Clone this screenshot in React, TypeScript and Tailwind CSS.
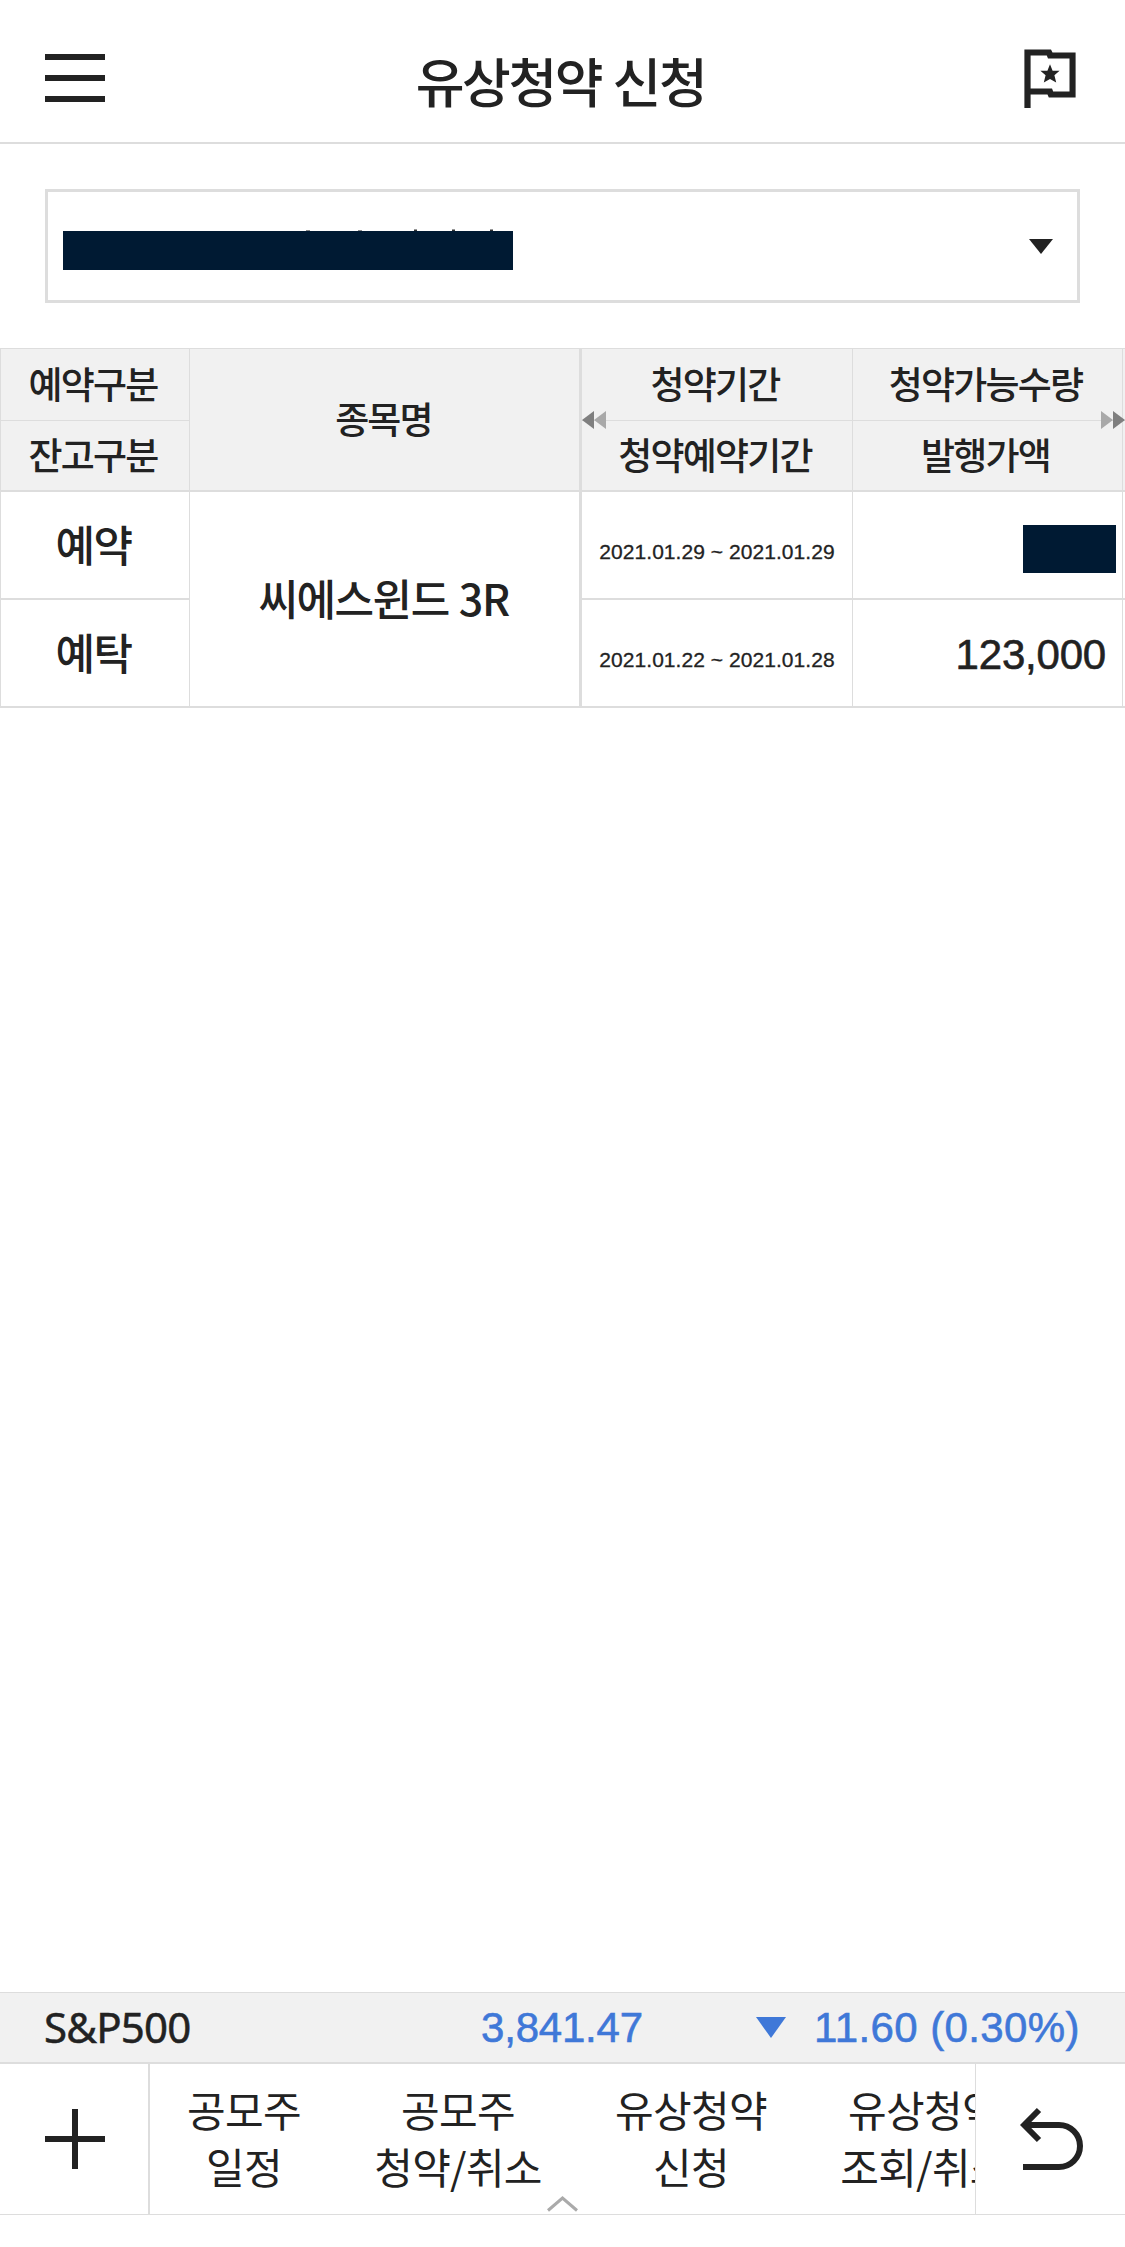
import type { ReactNode } from "react";
import clsx from "clsx";

const TABS = [
  { lines: ["공모주", "일정"], width: "w-[188px]" },
  { lines: ["공모주", "청약/취소"], width: "w-[240px]" },
  { lines: ["유상청약", "신청"], width: "w-[226px]" },
  { lines: ["유상청약", "조회/취소"], width: "w-[240px]" },
];

function HeadCell({ children, className }: { children?: ReactNode; className?: string }) {
  return (
    <div
      className={clsx(
        "flex items-center justify-center whitespace-nowrap bg-[#f1f1f1] pb-[3px] text-[37px] font-medium leading-none tracking-[-1.8px]",
        className,
      )}
    >
      {children}
    </div>
  );
}

function Cell({ children, className }: { children?: ReactNode; className?: string }) {
  return (
    <div className={clsx("flex items-center whitespace-nowrap border-b-2 border-[#ddd] leading-none", className)}>
      {children}
    </div>
  );
}

// Two stacked headings over two stacked values
function SplitColumn({ head, className, children }: { head: string[]; className?: string; children?: ReactNode }) {
  return (
    <div className={clsx("flex shrink-0 flex-col border-[#ddd]", className)}>
      <HeadCell className="h-[73px] border-y border-[#ddd] pr-1">{head[0]}</HeadCell>
      <HeadCell className="h-[71px] border-b-2 border-[#ddd] pr-1">{head[1]}</HeadCell>
      {children}
    </div>
  );
}

function Header() {
  return (
    <header className="flex h-36 items-center justify-between border-b-2 border-[#ddd] pl-[45px] pr-[49px]">
      <div className="mt-3.5 flex w-[60px] flex-col gap-[15px]">
        <span className="h-1.5 bg-[#222]" />
        <span className="h-1.5 bg-[#222]" />
        <span className="h-1.5 bg-[#222]" />
      </div>
      <h1 className="mr-2 mt-[18px] text-[53px] font-medium leading-none tracking-[-2.4px] [word-spacing:2px]">
        유상청약 신청
      </h1>
      <svg className="mt-4 h-[60px] w-[52px]" viewBox="0 0 52 60" fill="#222">
        <path
          fillRule="evenodd"
          d="M.4 .4H27L28.5 3.4H51.6V48.5H24.8L23.5 45.5H6.6V59H.4ZM6.6 6.4V39.4H28L29.2 42.4H45.5V9.4H24L22.8 6.4Z"
        />
        <path d="M26 15.2L28.6 21.8H35.6L30.4 26.2L32.2 33.6L26 30L19.8 33.6L21.6 26.2L16.4 21.8H23.4Z" />
      </svg>
    </header>
  );
}

function AccountSelect() {
  return (
    <div className="mx-[45px] mt-[45px] flex h-[114px] items-center justify-between border-[3px] border-[#ddd] pl-[15px] pr-6">
      <div className="relative mt-[9px] h-[39px] w-[450px] bg-[#001a33]">
        <svg className="absolute -top-[2px] left-0 h-[2px] w-[450px]" viewBox="0 0 450 2">
          <path d="M243 1h4v1h-4zM295 1h4v1h-4z" fill="#888" />
          <path d="M351 .5h3v1.5h-3zM389 .5h3v1.5h-3zM427 .5h3v1.5h-3z" fill="#333" />
        </svg>
      </div>
      <svg className="h-[15px] w-6" viewBox="0 0 24 15" fill="#222">
        <path d="M0 0H24L12 15Z" />
      </svg>
    </div>
  );
}

function OfferingTable() {
  return (
    <section className="relative mt-[45px] flex h-[360px] overflow-hidden">
      <SplitColumn head={["예약구분", "잔고구분"]} className="w-[190px] border-x">
        <Cell className="h-[108px] justify-center pb-1 pr-[3px] text-[43px] font-medium tracking-[-1.6px]">예약</Cell>
        <Cell className="h-[108px] justify-center pb-1 pr-[3px] text-[43px] font-medium tracking-[-1.6px]">예탁</Cell>
      </SplitColumn>
      <div className="flex w-[392px] shrink-0 flex-col border-r-[3px] border-[#ddd]">
        <HeadCell className="h-36 border-b-2 border-t border-[#ddd] pr-0.5">종목명</HeadCell>
        <Cell className="h-[216px] justify-center pb-1 pr-0.5 text-[43px] font-medium tracking-[-1.5px] [word-spacing:2px]">
          씨에스윈드 3R
        </Cell>
      </div>
      <SplitColumn head={["청약기간", "청약예약기간"]} className="w-[271px] border-r">
        <Cell className="h-[108px] justify-center pt-[13px] font-['Liberation_Sans',sans-serif] text-[21px] tracking-[0.05px] [-webkit-text-stroke:0.3px_#222]">
          2021.01.29 ~ 2021.01.29
        </Cell>
        <Cell className="h-[108px] justify-center pt-[13px] font-['Liberation_Sans',sans-serif] text-[21px] tracking-[0.05px] [-webkit-text-stroke:0.3px_#222]">
          2021.01.22 ~ 2021.01.28
        </Cell>
      </SplitColumn>
      <SplitColumn head={["청약가능수량", "발행가액"]} className="w-[270px] border-r">
        <Cell className="h-[108px] justify-end pr-1.5">
          <span className="mt-[7px] h-12 w-[93px] bg-[#001a33]" />
        </Cell>
        <Cell className="h-[108px] justify-end pr-4 pt-[3px] font-['Liberation_Sans',sans-serif] text-[42px] tracking-[-0.2px] [-webkit-text-stroke:0.6px_#222]">
          123,000
        </Cell>
      </SplitColumn>
      <SplitColumn head={[]} className="w-[2px]">
        <Cell className="h-[108px]" />
        <Cell className="h-[108px]" />
      </SplitColumn>

      {/* horizontal scroll hints */}
      <svg className="absolute left-[582px] top-[63px] h-[18px] w-6" viewBox="0 0 24 18">
        <path d="M0 9L12 0V18Z" fill="#7f7f7f" />
        <path d="M12 9L24 0V18Z" fill="#a9a9a9" />
      </svg>
      <svg className="absolute right-0 top-[63px] h-[18px] w-6" viewBox="0 0 24 18">
        <path d="M12 9L0 0V18Z" fill="#a9a9a9" />
        <path d="M24 9L12 0V18Z" fill="#7f7f7f" />
      </svg>
    </section>
  );
}

function Ticker() {
  return (
    <div className="flex h-[72px] items-center border-b-2 border-t border-[#ddd] bg-[#f1f1f1] pl-11 pr-[45px] text-[42px] leading-none">
      <span className="w-[437px] pb-0.5 font-['Noto_Sans',sans-serif] tracking-[-0.8px] [-webkit-text-stroke:0.5px_#222]">
        S&amp;P500
      </span>
      <span className="font-['Liberation_Sans',sans-serif] tracking-[-0.2px] text-[#3f78d8] [-webkit-text-stroke:0.6px_#3f78d8]">
        3,841.47
      </span>
      <svg className="ml-auto h-[21px] w-[30px]" viewBox="0 0 30 21" fill="#3f78d8">
        <path d="M0 0H30L15 21Z" />
      </svg>
      <span className="ml-7 font-['Liberation_Sans',sans-serif] tracking-[0.4px] text-[#3f78d8] [-webkit-text-stroke:0.6px_#3f78d8]">
        11.60 (0.30%)
      </span>
    </div>
  );
}

function BottomBar() {
  return (
    <nav className="relative flex h-[151px] border-b border-[#ddd]">
      <button className="flex w-[150px] shrink-0 items-center border-r-2 border-[#ddd] pl-[45px]">
        <svg className="h-[60px] w-[60px]" viewBox="0 0 60 60" stroke="#222" strokeWidth="6">
          <path d="M0 30H60M30 0V60" />
        </svg>
      </button>
      <div className="flex w-[825px] shrink-0 overflow-hidden">
        {TABS.map((tab) => (
          <button
            key={tab.lines.join(" ")}
            className={clsx(
              "shrink-0 whitespace-nowrap pb-1 text-center text-[42px] leading-[57px] tracking-[-0.7px]",
              tab.width,
            )}
          >
            {tab.lines[0]}
            <br />
            {tab.lines[1]}
          </button>
        ))}
      </div>
      <button className="flex flex-1 items-center border-l border-[#ddd] pl-11">
        <svg className="h-[64px] w-[64px]" viewBox="0 0 64 64" fill="none" stroke="#222" strokeWidth="6">
          <path d="M19 3L4.2 18L19 33M4.2 18H39A21 21 0 0 1 39 60H3" />
        </svg>
      </button>
      <svg className="absolute left-[547px] top-[132px] h-4 w-[31px]" viewBox="0 0 31 16" fill="none">
        <path d="M1 14.5L15.5 2L30 14.5" stroke="#aaa" strokeWidth="3" />
      </svg>
    </nav>
  );
}

export default function App() {
  return (
    <div className="flex h-[2247px] w-[1125px] flex-col overflow-hidden bg-white pb-8 font-['Noto_Sans_CJK_KR',sans-serif] text-[#222]">
      <Header />
      <AccountSelect />
      <OfferingTable />
      <div className="mt-auto">
        <Ticker />
        <BottomBar />
      </div>
    </div>
  );
}
